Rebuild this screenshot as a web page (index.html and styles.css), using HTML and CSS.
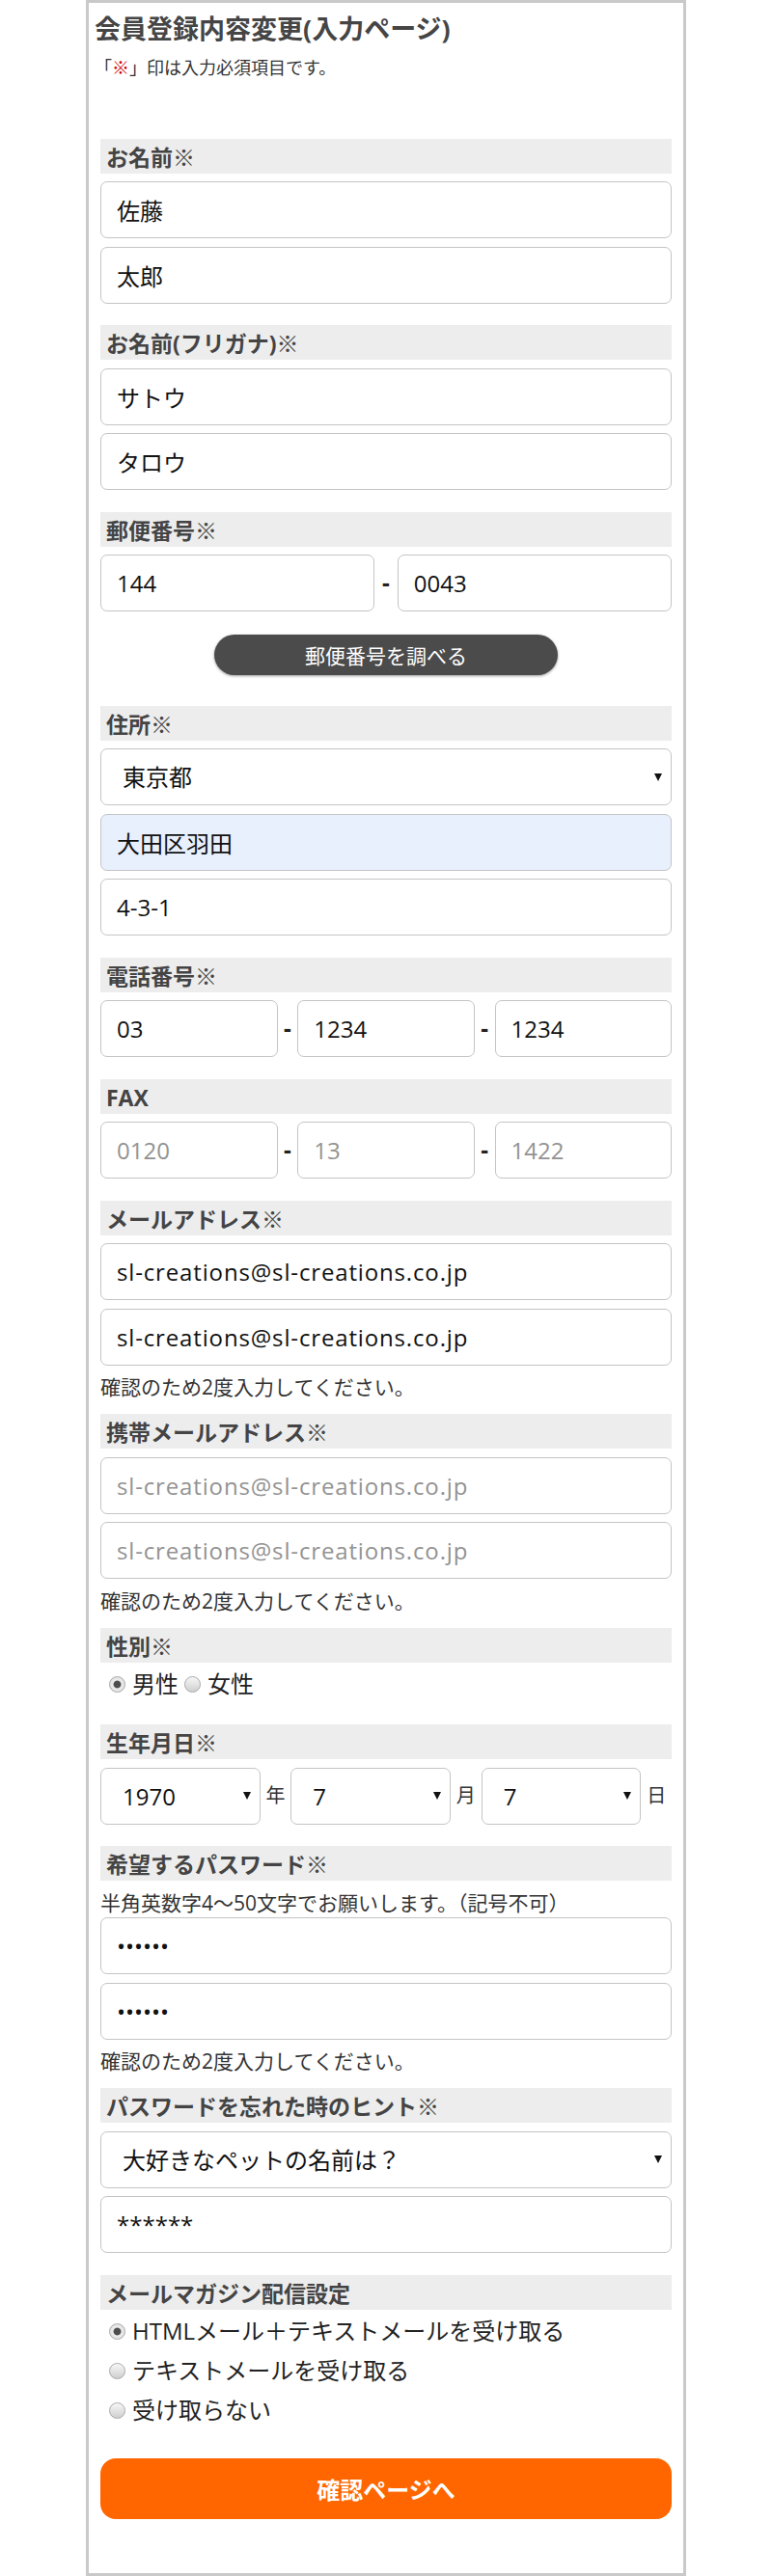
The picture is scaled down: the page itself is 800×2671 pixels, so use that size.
FILE: index.html
```html
<!DOCTYPE html>
<html lang="ja">
<head>
<meta charset="utf-8">
<title>会員登録内容変更(入力ページ)</title>
<link rel="stylesheet" href="styles.css">
</head>
<body>
<div class="page">
  <div class="head">
    <h1 class="title">会員登録内容変更(入力ページ)</h1>
    <p class="req-note">「<span class="red">※</span>」印は入力必須項目です。</p>
  </div>
  <form class="form">
    <div class="grp">
      <div class="lbl">お名前※</div>
      <input class="inp" type="text" value="佐藤">
      <input class="inp" type="text" value="太郎">
    </div>
    <div class="grp">
      <div class="lbl">お名前(フリガナ)※</div>
      <input class="inp" type="text" value="サトウ">
      <input class="inp" type="text" value="タロウ">
    </div>
    <div class="grp zip">
      <div class="lbl">郵便番号※</div>
      <div class="row">
        <input class="inp half" type="text" value="144">
        <span class="dash">-</span>
        <input class="inp half" type="text" value="0043">
      </div>
      <button type="button" class="zipbtn">郵便番号を調べる</button>
    </div>
    <div class="grp">
      <div class="lbl">住所※</div>
      <div class="sel"><select class="inp selbox"><option>東京都</option></select></div>
      <input class="inp autofill" type="text" value="大田区羽田">
      <input class="inp" type="text" value="4-3-1">
    </div>
    <div class="grp">
      <div class="lbl">電話番号※</div>
      <div class="row">
        <input class="inp third" type="text" value="03">
        <span class="dash">-</span>
        <input class="inp third" type="text" value="1234">
        <span class="dash">-</span>
        <input class="inp third" type="text" value="1234">
      </div>
    </div>
    <div class="grp">
      <div class="lbl">FAX</div>
      <div class="row">
        <input class="inp third" type="text" placeholder="0120">
        <span class="dash">-</span>
        <input class="inp third" type="text" placeholder="13">
        <span class="dash">-</span>
        <input class="inp third" type="text" placeholder="1422">
      </div>
    </div>
    <div class="grp noted">
      <div class="lbl">メールアドレス※</div>
      <input class="inp wide" type="text" value="sl-creations@sl-creations.co.jp">
      <input class="inp wide" type="text" value="sl-creations@sl-creations.co.jp">
      <p class="note">確認のため2度入力してください。</p>
    </div>
    <div class="grp noted">
      <div class="lbl">携帯メールアドレス※</div>
      <input class="inp wide" type="text" placeholder="sl-creations@sl-creations.co.jp">
      <input class="inp wide" type="text" placeholder="sl-creations@sl-creations.co.jp">
      <p class="note">確認のため2度入力してください。</p>
    </div>
    <div class="grp gender">
      <div class="lbl">性別※</div>
      <div class="radios">
        <label class="opt"><input class="radio" type="radio" name="sex" checked>男性</label>
        <label class="opt"><input class="radio" type="radio" name="sex">女性</label>
      </div>
    </div>
    <div class="grp">
      <div class="lbl">生年月日※</div>
      <div class="row">
        <div class="sel date"><select class="inp selbox"><option>1970</option></select></div>
        <span class="unit">年</span>
        <div class="sel date"><select class="inp selbox"><option>7</option></select></div>
        <span class="unit">月</span>
        <div class="sel date"><select class="inp selbox"><option>7</option></select></div>
        <span class="unit">日</span>
      </div>
    </div>
    <div class="grp noted">
      <div class="lbl">希望するパスワード※</div>
      <p class="note pre">半角英数字4～50文字でお願いします。（記号不可）</p>
      <input class="inp pw" type="password" value="aaaaaa">
      <input class="inp pw" type="password" value="aaaaaa">
      <p class="note">確認のため2度入力してください。</p>
    </div>
    <div class="grp">
      <div class="lbl">パスワードを忘れた時のヒント※</div>
      <div class="sel"><select class="inp selbox"><option>大好きなペットの名前は？</option></select></div>
      <input class="inp" type="text" value="******">
    </div>
    <div class="grp mag">
      <div class="lbl">メールマガジン配信設定</div>
      <div class="radio-list">
        <label class="opt"><input class="radio" type="radio" name="mag" checked>HTMLメール＋テキストメールを受け取る</label>
        <label class="opt"><input class="radio" type="radio" name="mag">テキストメールを受け取る</label>
        <label class="opt"><input class="radio" type="radio" name="mag">受け取らない</label>
      </div>
    </div>
    <button type="button" class="submit">確認ページへ</button>
  </form>
</div>
</body>
</html>
```
FILE: styles.css
```css
* {
  box-sizing: border-box;
}

html, body {
  margin: 0;
  padding: 0;
  background: #fff;
}

body {
  font-family: "Open Sans", "Noto Sans CJK JP", sans-serif;
  color: #222;
}

.page {
  width: 622px;
  margin: 0 auto;
  border: 3px solid #c9c9c9;
  background: #fff;
}

.head {
  padding: 9px 5px 0 6px;
}

.title {
  margin: 0;
  font-size: 27px;
  line-height: 36px;
  font-weight: bold;
  color: #454545;
}

.req-note {
  margin: 10px 0 0;
  font-size: 18px;
  line-height: 24px;
  color: #333;
}

.red {
  color: #d00000;
}

.form {
  padding: 61.5px 12px 56px;
}

.grp {
  display: flex;
  flex-direction: column;
  gap: 8.5px;
  margin-bottom: 22.5px;
}

.grp.zip {
  margin-bottom: 31.5px;
}

.grp.noted {
  margin-bottom: 14px;
}

.grp.gender {
  margin-bottom: 28px;
}

.lbl {
  height: 36px;
  padding: 3px 0 0 6px;
  line-height: 33px;
  background: #ededed;
  font-size: 23px;
  font-weight: bold;
  color: #444;
  white-space: nowrap;
}

.inp {
  display: block;
  width: 100%;
  height: 59px;
  margin: 0;
  padding: 0 16px;
  border: 1px solid #c4c4c4;
  border-radius: 7px;
  background: #fff;
  font-family: "Open Sans", "Noto Sans CJK JP", sans-serif;
  font-size: 24px;
  color: #111;
  outline: none;
}

.inp::placeholder {
  color: #939393;
  opacity: 1;
}

.inp.wide {
  letter-spacing: 0.85px;
}

.inp.autofill {
  background: #e8f0fe;
}

.row {
  display: flex;
  align-items: center;
}

.half {
  width: 48%;
}

.third {
  width: 31%;
}

.dash {
  flex: 1;
  text-align: center;
  font-family: "Liberation Sans", sans-serif;
  font-size: 25px;
  font-weight: bold;
  color: #222;
}

.zipbtn {
  align-self: center;
  width: 60%;
  height: 42px;
  margin-top: 15.5px;
  border: none;
  border-radius: 21px;
  background: #4b4b4b;
  box-shadow: 0 1px 3px rgba(0, 0, 0, 0.4);
  color: #fff;
  font-family: "Open Sans", "Noto Sans CJK JP", sans-serif;
  font-size: 21px;
  padding: 0;
}

.sel {
  position: relative;
}

.sel::after {
  content: "";
  position: absolute;
  right: 10px;
  top: 50%;
  margin-top: -4px;
  border-left: 4.5px solid transparent;
  border-right: 4.5px solid transparent;
  border-top: 8px solid #111;
  pointer-events: none;
}

.selbox {
  appearance: none;
  -webkit-appearance: none;
  padding-left: 22px;
}

.sel.date {
  width: 28%;
}

.unit {
  flex: 1;
  text-align: center;
  font-size: 20px;
  color: #333;
  margin-top: -3px;
}

.radios {
  display: flex;
  align-items: center;
  height: 28px;
  padding-left: 3px;
}

.radio-list {
  display: flex;
  flex-direction: column;
  gap: 13px;
  padding-left: 3px;
}

.opt {
  display: flex;
  align-items: center;
  height: 28px;
  font-size: 24px;
  line-height: 28px;
  color: #222;
}

.radio {
  appearance: none;
  -webkit-appearance: none;
  width: 17px;
  height: 17px;
  margin: 0 7px 0 6px;
  border: 1px solid #a9a9a9;
  border-radius: 50%;
  background: linear-gradient(#f7f7f7, #cfcfcf);
  flex: none;
}

.radio:checked {
  background: radial-gradient(circle, #4d4d4d 0, #4d4d4d 3.4px, #ececec 4.4px, #d6d6d6 100%);
}

.note {
  margin: 0;
  font-size: 21px;
  line-height: 28px;
  color: #333;
  white-space: nowrap;
}

.note.pre {
  margin-bottom: -7px;
}

.submit {
  display: block;
  width: 100%;
  height: 63px;
  margin-top: 36px;
  border: none;
  border-radius: 16px;
  background: #ff6600;
  color: #fff;
  font-family: "Open Sans", "Noto Sans CJK JP", sans-serif;
  font-size: 24px;
  font-weight: bold;
  padding: 0;
}
```
